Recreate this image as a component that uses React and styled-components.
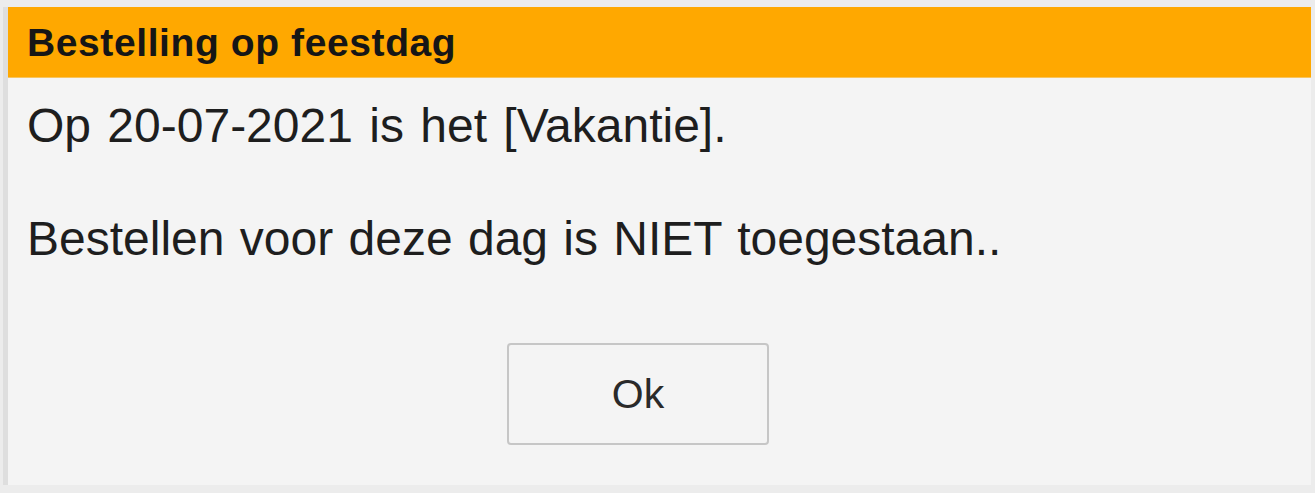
import React from "react";
import styled, { createGlobalStyle } from "styled-components";

const Global = createGlobalStyle`
  html, body { margin: 0; padding: 0; background: #ececec; }
  body { font-family: "Liberation Sans", Arial, sans-serif; }
`;

const Page = styled.div`
  width: 1315px;
  height: 493px;
  box-sizing: border-box;
  padding: 7px 4px 8px 3px;
  background: #ececec;
  display: flex;
`;

const Frame = styled.div`
  flex: 1;
  display: flex;
  flex-direction: column;
  border-left: 5px solid #dedede;
  background: #f4f4f4;
`;

const Header = styled.div`
  height: 71px;
  background: #ffa800;
  display: flex;
  align-items: center;
  padding-left: 19px;
  border-bottom: 1px solid #f7c45e;
  box-sizing: border-box;
`;

const Title = styled.h1`
  margin: 0;
  font-family: "Liberation Sans", Arial, sans-serif;
  font-weight: bold;
  font-size: 39px;
  line-height: 71px;
  color: #161616;
  letter-spacing: 0.6px;
`;

const Body = styled.div`
  display: flex;
  flex-direction: column;
  padding: 20px 0 0 19px;
`;

const Line = styled.p`
  margin: 0 0 ${(p) => p.$gap || 0}px 0;
  font-size: 48px;
  line-height: 56px;
  color: #1e1e1e;
  word-spacing: ${(p) => p.$words || 0}px;
  white-space: nowrap;
`;

const Actions = styled.div`
  display: flex;
  padding: 76px 0 0 499px;
`;

const Button = styled.button`
  width: 262px;
  height: 102px;
  box-sizing: border-box;
  border: 2px solid #c6c6c6;
  border-radius: 4px;
  background: #f4f4f4;
  font-family: "Liberation Sans", Arial, sans-serif;
  font-size: 41px;
  color: #2a2a2a;
  padding: 0;
  cursor: pointer;
`;

export default function App() {
  return (
    <>
      <Global />
      <Page>
        <Frame>
          <Header>
            <Title>Bestelling op feestdag</Title>
          </Header>
          <Body>
            <Line $gap={57} $words={3}>
              Op 20-07-2021 is het [Vakantie].
            </Line>
            <Line $words={2}>Bestellen voor deze dag is NIET toegestaan..</Line>
          </Body>
          <Actions>
            <Button>Ok</Button>
          </Actions>
        </Frame>
      </Page>
    </>
  );
}
